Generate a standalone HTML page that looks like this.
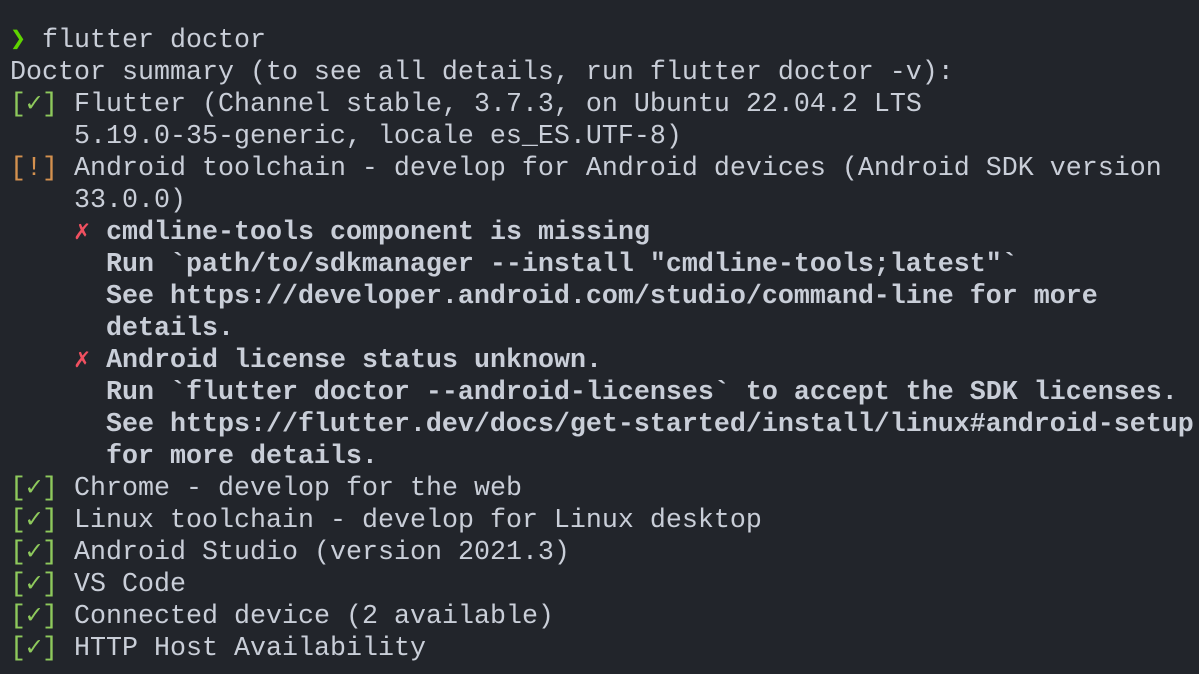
<!DOCTYPE html>
<html><head><meta charset="utf-8"><style>
html,body{margin:0;padding:0;background:#22252b;width:1199px;height:674px;overflow:hidden}
pre{margin:0;position:absolute;left:10px;top:25px;font-family:"Liberation Mono","DejaVu Sans Mono",monospace;font-size:26.67px;line-height:32px;color:#c9ced8;white-space:pre}
.g{color:#8ec95c}.o{color:#d4914f}.r{color:#f05060}.p{color:#5fd400;font-weight:bold}b{font-weight:bold}
</style></head><body><pre><span class="p">❯</span> flutter doctor
Doctor summary (to see all details, run flutter doctor -v):
<span class="g">[✓]</span> Flutter (Channel stable, 3.7.3, on Ubuntu 22.04.2 LTS
    5.19.0-35-generic, locale es_ES.UTF-8)
<span class="o">[!]</span> Android toolchain - develop for Android devices (Android SDK version
    33.0.0)
    <span class="r">✗</span> <b>cmdline-tools component is missing</b>
      <b>Run `path/to/sdkmanager --install "cmdline-tools;latest"`</b>
      <b>See https://developer.android.com/studio/command-line for more</b>
      <b>details.</b>
    <span class="r">✗</span> <b>Android license status unknown.</b>
      <b>Run `flutter doctor --android-licenses` to accept the SDK licenses.</b>
      <b>See https://flutter.dev/docs/get-started/install/linux#android-setup</b>
      <b>for more details.</b>
<span class="g">[✓]</span> Chrome - develop for the web
<span class="g">[✓]</span> Linux toolchain - develop for Linux desktop
<span class="g">[✓]</span> Android Studio (version 2021.3)
<span class="g">[✓]</span> VS Code
<span class="g">[✓]</span> Connected device (2 available)
<span class="g">[✓]</span> HTTP Host Availability</pre></body></html>
